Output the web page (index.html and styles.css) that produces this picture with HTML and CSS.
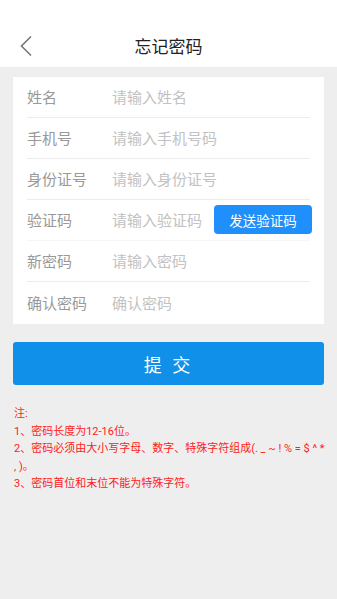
FILE: index.html
```html
<!DOCTYPE html>
<html lang="zh">
<head>
<meta charset="utf-8">
<title>忘记密码</title>
<link rel="stylesheet" href="styles.css">
</head>
<body>
<header class="header">
  <div class="bar">
    <svg class="back" width="14" height="22" viewBox="0 0 14 22"><path d="M12 1.5 L2.5 11 L12 20.5" fill="none" stroke="#777" stroke-width="1.6"/></svg>
    <div class="title">忘记密码</div>
  </div>
</header>
<main>
  <section class="card">
    <div class="row"><span class="label">姓名</span><span class="ph">请输入姓名</span></div>
    <div class="row"><span class="label">手机号</span><span class="ph">请输入手机号码</span></div>
    <div class="row"><span class="label">身份证号</span><span class="ph">请输入身份证号</span></div>
    <div class="row faint"><span class="label">验证码</span><span class="ph">请输入验证码</span><span class="send">发送验证码</span></div>
    <div class="row"><span class="label">新密码</span><span class="ph">请输入密码</span></div>
    <div class="row last"><span class="label">确认密码</span><span class="ph">确认密码</span></div>
  </section>
  <div class="submit">提 交</div>
  <div class="notes">
    <p>注:</p>
    <p>1、密码长度为12-16位。</p>
    <p class="nowrap">2、密码必须由大小写字母、数字、特殊字符组成(. _ ~ ! % = $ ^ *<br>, )。</p>
    <p>3、密码首位和末位不能为特殊字符。</p>
  </div>
</main>
</body>
</html>
```
FILE: styles.css
```css
html, body {
  margin: 0;
  padding: 0;
  background: #eeeeee;
  font-family: Roboto, "Noto Sans CJK SC", sans-serif;
}
.header {
  background: #ffffff;
  height: 67px;
  padding-top: 24px;
  box-sizing: border-box;
}
.bar {
  height: 43px;
  display: flex;
  align-items: center;
  justify-content: center;
  position: relative;
}
.back {
  position: absolute;
  left: 19px;
  top: 11px;
}
.title {
  font-size: 17px;
  color: #222222;
}
.card {
  margin: 10px 13px 0;
  background: #ffffff;
  padding: 0 14px;
}
.row {
  height: 41px;
  box-sizing: border-box;
  border-bottom: 1px solid #ececec;
  display: flex;
  align-items: center;
  font-size: 15px;
  padding-bottom: 1px;
}
.row.faint {
  border-bottom-color: #f6f6f6;
}
.row.last {
  border-bottom: none;
  height: 42px;
}
.label {
  width: 85px;
  color: #999999;
  flex: none;
}
.ph {
  color: #c2c2c2;
  flex: 1;
}
.send {
  flex: none;
  width: 98px;
  height: 29px;
  margin-right: -2px;
  background: #1e8ffb;
  color: #ffffff;
  border-radius: 4px;
  font-size: 13.5px;
  display: flex;
  align-items: center;
  justify-content: center;
}
.submit {
  margin: 18px 13px 0;
  height: 43px;
  background: #1190ea;
  border-radius: 3px;
  color: #ffffff;
  font-size: 18px;
  display: flex;
  align-items: center;
  justify-content: center;
  letter-spacing: 3px;
}
.notes {
  margin: 20px 14px 0 14px;
  color: #ff2121;
  font-size: 11px;
  line-height: 17.5px;
}
.notes p {
  margin: 0;
}
.notes .nowrap {
  white-space: nowrap;
}
```
